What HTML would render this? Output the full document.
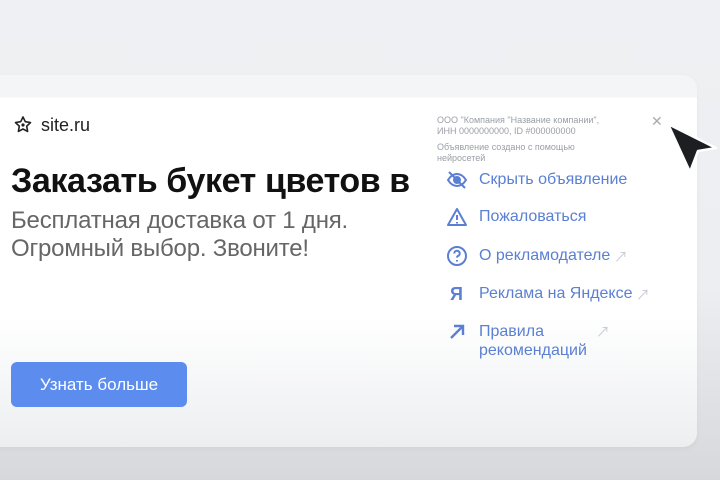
<!DOCTYPE html>
<html><head><meta charset="utf-8"><style>
*{margin:0;padding:0;box-sizing:border-box}
body{width:720px;height:480px;overflow:hidden;font-family:"Liberation Sans","Noto Sans CJK SC",sans-serif;background:linear-gradient(180deg,#eef0f3 0%,#eceef1 60%,#d6d8db 100%);position:relative}
.card{position:absolute;left:-20px;top:75px;width:717px;height:372px;border-radius:14px;background:linear-gradient(180deg,#f4f5f7 0,#f4f5f7 22px,#fff 23px,#fff 65%,#eceef0 100%);box-shadow:0 2px 6px rgba(0,0,0,.04)}
.abs{position:absolute;white-space:nowrap}
.menu{color:#5a7fd3;font-size:16px;line-height:18px}
.ext{color:#c8cdd6;font-size:14px}
.small{color:#9a9ea6;font-size:9px;line-height:11px}
</style></head><body>
<div class="card"></div>
<svg class="abs" style="left:13px;top:115px" width="20" height="20" viewBox="0 0 20 20"><path d="M10 2l2.3 4.7 5.2.8-3.8 3.7.9 5.2L10 14l-4.6 2.4.9-5.2L2.5 7.5l5.2-.8z" fill="none" stroke="#222" stroke-width="1.6" stroke-linejoin="round"/><circle cx="10" cy="10" r="1.6" fill="#222"/></svg>
<div class="abs" style="left:41px;top:115px;font-size:18px;color:#222">site.ru</div>
<div class="abs" style="left:11px;top:162px;font-size:34px;font-weight:bold;color:#111;letter-spacing:-0.4px">Заказать букет цветов в</div>
<div class="abs" style="left:11px;top:207px;font-size:24px;color:#666;line-height:28px;letter-spacing:-0.2px">Бесплатная доставка от 1 дня.<br>Огромный выбор. Звоните!</div>
<div class="abs" style="left:11px;top:362px;width:176px;height:45px;border-radius:6px;background:#5b8cee;color:#fff;font-size:17px;text-align:center;line-height:45px">Узнать больше</div>
<div class="abs small" style="left:437px;top:115px">ООО "Компания "Название компании",<br>ИНН 0000000000, ID #000000000</div>
<div class="abs small" style="left:437px;top:142px">Объявление создано с помощью<br>нейросетей</div>
<div class="abs" style="left:651px;top:113px;color:#aaa;font-size:14px">✕</div>
<svg class="abs" style="left:660px;top:118px" width="60" height="60" viewBox="0 0 60 60"><path d="M8 6 L56 30 L38 33 L30 54 Z" fill="#1c1e22" stroke="#fff" stroke-width="2.5" stroke-linejoin="round"/></svg>
<svg class="abs" style="left:446px;top:169px" width="22" height="22" viewBox="0 0 22 22" fill="none" stroke="#5a7fd3" stroke-width="2"><path d="M2 11c2.5-4 5.5-6 9-6s6.5 2 9 6c-2.5 4-5.5 6-9 6s-6.5-2-9-6z"/><circle cx="11" cy="11" r="3" fill="#5a7fd3"/><path d="M3 3l16 16"/></svg>
<div class="abs menu" style="left:479px;top:171px">Скрыть объявление</div>
<svg class="abs" style="left:446px;top:206px" width="22" height="22" viewBox="0 0 22 22" fill="none" stroke="#5a7fd3" stroke-width="2" stroke-linejoin="round"><path d="M11 3L2 19h18z"/><path d="M11 9v5M11 16v1.5"/></svg>
<div class="abs menu" style="left:479px;top:208px">Пожаловаться</div>
<svg class="abs" style="left:446px;top:245px" width="22" height="22" viewBox="0 0 22 22" fill="none" stroke="#5a7fd3" stroke-width="2"><circle cx="11" cy="11" r="9"/><path d="M8.3 8.5a2.7 2.7 0 1 1 3.6 2.5c-.7.3-.9.8-.9 1.6M11 15v1.5"/></svg>
<div class="abs menu" style="left:479px;top:247px">О рекламодателе</div>
<div class="abs ext" style="left:614px;top:247px">↗</div>
<div class="abs" style="left:450px;top:284px;color:#5a7fd3;font-size:18px;font-weight:bold">Я</div>
<div class="abs menu" style="left:479px;top:285px">Реклама на Яндексе</div>
<div class="abs ext" style="left:636px;top:285px">↗</div>
<svg class="abs" style="left:447px;top:322px" width="20" height="20" viewBox="0 0 20 20" fill="none" stroke="#5a7fd3" stroke-width="2.4"><path d="M4 16L16 4M7 4h9v9"/></svg>
<div class="abs menu" style="left:479px;top:322px;line-height:19px">Правила<br>рекомендаций</div>
<div class="abs ext" style="left:596px;top:322px">↗</div>
</body></html>
